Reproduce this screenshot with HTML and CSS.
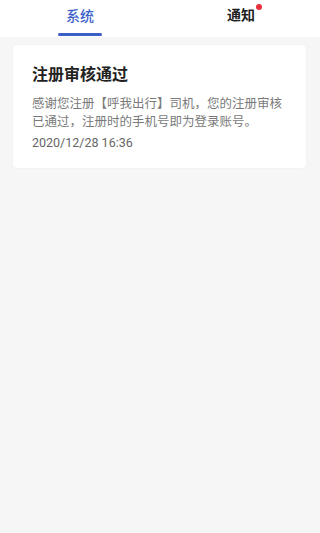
FILE: index.html
```html
<!DOCTYPE html>
<html lang="zh">
<head>
<meta charset="utf-8">
<link rel="stylesheet" href="styles.css">
</head>
<body>
<div class="page">
  <div class="tabs">
    <div class="tab active"><span class="label">系统</span><span class="bar"></span></div>
    <div class="tab"><span class="label">通知<span class="dot"></span></span></div>
  </div>
  <div class="list">
    <div class="card">
      <div class="title">注册审核通过</div>
      <div class="body">感谢您注册【呼我出行】司机，您的注册审核已通过，注册时的手机号即为登录账号。</div>
      <div class="date">2020/12/28 16:36</div>
    </div>
  </div>
</div>
</body>
</html>
```
FILE: styles.css
```css
html, body {
  margin: 0;
  padding: 0;
}
body {
  font-family: Roboto, "Noto Sans CJK SC", sans-serif;
  background: #f6f6f6;
}
.page {
  width: 320px;
  height: 533px;
  display: flex;
  flex-direction: column;
  background: #f6f6f6;
}
.tabs {
  height: 37px;
  background: #fff;
  display: flex;
}
.tab {
  display: flex;
  flex-direction: column;
  align-items: center;
  padding-top: 7px;
  box-sizing: border-box;
}
.tab:first-child { flex: 0 0 160px; }
.tab:last-child { flex: 0 0 160px; padding-left: 2px; padding-top: 6px; }
.tab .label {
  position: relative;
  font-size: 14px;
  line-height: 18px;
  font-weight: 700;
  color: #1f1f1f;
}
.tab.active .label {
  color: #3d5fc8;
  font-weight: 500;
}
.bar {
  width: 44px;
  height: 3px;
  border-radius: 2px;
  background: #3d5fc8;
  margin-top: 8px;
}
.dot {
  position: absolute;
  right: -7px;
  top: -2px;
  width: 6px;
  height: 6px;
  border-radius: 50%;
  background: #e8303c;
}
.list {
  padding: 8px 14px 0 13px;
}
.card {
  background: #fff;
  border-radius: 4px;
  padding: 19px 19px 16px 19px;
  box-shadow: 0 0 2px rgba(0,0,0,0.06);
}
.title {
  font-size: 16px;
  line-height: 22px;
  font-weight: 700;
  color: #222;
  margin-bottom: 9px;
}
.body {
  font-size: 12.5px;
  line-height: 18px;
  color: #7a7a7a;
}
.date {
  margin-top: 3px;
  font-size: 12.5px;
  line-height: 18px;
  color: #666;
}
```
